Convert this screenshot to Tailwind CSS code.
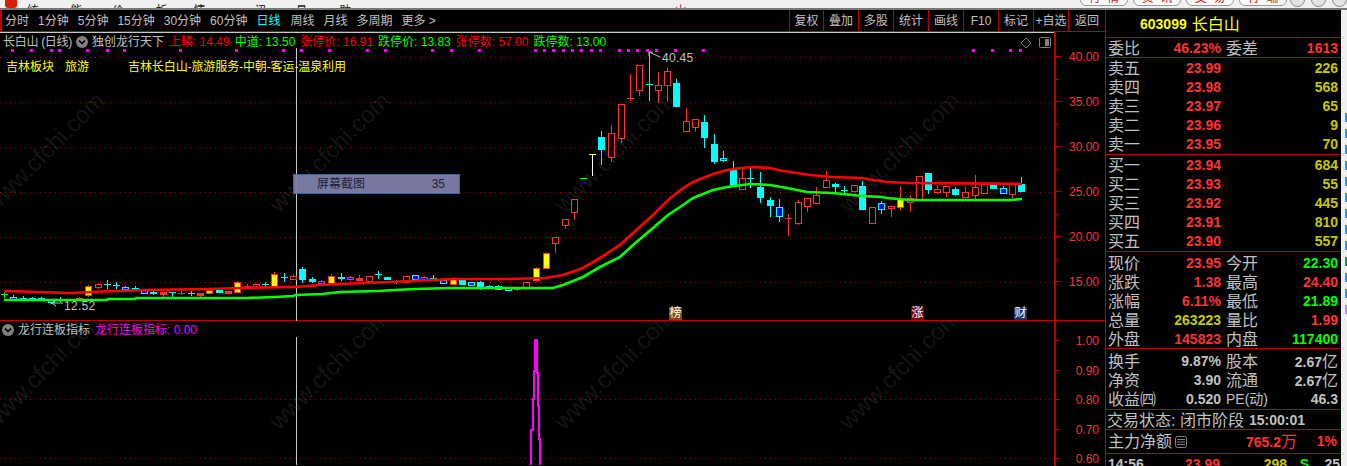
<!DOCTYPE html>
<html lang="zh-CN">
<head>
    <meta charset="UTF-8">
    <title>长白山 日线</title>
    <script src="https://cdn.jsdelivr.net/npm/@tailwindcss/browser@4"></script>
</head>
<body class="bg-black w-[1347px] h-[466px] overflow-hidden font-['Liberation_Sans','Noto_Sans_CJK_SC',sans-serif] text-[12px] text-[#c0c0c0]">

    <!-- menu bar, cut off by the top of the window -->
    <div class="relative h-[10px] overflow-hidden bg-[#f0f0f0] border-b-2 border-[#777777] text-[#222222]">
        <div class="flex h-[16px] -mt-[5px] items-center leading-[16px]">
            <div class="w-[12px] h-[14px] -mt-[4px] ml-[5px] bg-[#d81e06] rounded-b-[3px]"></div>
            <span class="ml-[10px]">系统</span>
            <span class="ml-[20px]">功能</span>
            <span class="ml-[18px]">报价</span>
            <span class="ml-[20px]">分析</span>
            <span class="ml-[14px]">扩展行情</span>
            <span class="ml-[14px]">资讯</span>
            <span class="ml-[17px]">工具</span>
            <span class="ml-[20px]">帮助</span>
            <span class="ml-[312px] text-[#e01010]">交易未登录&nbsp;&nbsp;长白山</span>
            <div class="flex ml-[304px] gap-[5px] text-[#d01010]">
                <span class="w-[48px] h-[15px] -mt-[9px] text-center leading-[13px] border border-[#999999] rounded-b-[6px] bg-white">行&nbsp;&nbsp;情</span>
                <span class="w-[48px] h-[15px] -mt-[9px] text-center leading-[13px] border border-[#999999] rounded-b-[6px] bg-white">资&nbsp;&nbsp;讯</span>
                <span class="w-[48px] h-[15px] -mt-[9px] text-center leading-[13px] border border-[#999999] rounded-b-[6px] bg-white">交&nbsp;&nbsp;易</span>
                <span class="w-[48px] h-[15px] -mt-[9px] text-center leading-[13px] border border-[#999999] rounded-b-[6px] bg-white">行&nbsp;&nbsp;端</span>
            </div>
            <div class="flex ml-[3px] gap-[6px]">
                <span class="w-[15px] h-[15px] -mt-[8px] border border-[#888888] rounded-full bg-[#e4e4e4]"></span>
                <span class="w-[15px] h-[15px] -mt-[8px] border border-[#888888] rounded-full bg-[#e4e4e4]"></span>
                <span class="w-[15px] h-[15px] -mt-[8px] border border-[#888888] rounded-full bg-[#e4e4e4]"></span>
            </div>
        </div>
    </div>

    <div class="flex h-[456px]">
        <!-- left: toolbar and charts -->
        <div class="w-[1106px] shrink-0 border-r border-[#c00000] flex flex-col">
            <div class="flex justify-between h-[22px] shrink-0 border-b border-[#c00000] border-l-2 leading-[23px]">
                <div class="flex gap-[9px] pl-[3px]">
                    <span>分时</span><span>1分钟</span><span>5分钟</span><span>15分钟</span><span>30分钟</span><span>60分钟</span>
                    <span class="text-[#00ffff]">日线</span>
                    <span class="ml-px">周线</span><span>月线</span><span>多周期</span><span>更多 &gt;</span>
                </div>
                <div class="flex text-center">
                    <span class="w-[34px] border-l border-[#c00000]">复权</span>
                    <span class="w-[35px] border-l border-[#c00000]">叠加</span>
                    <span class="w-[35px] border-l border-[#c00000]">多股</span>
                    <span class="w-[35px] border-l border-[#c00000]">统计</span>
                    <span class="w-[35px] border-l border-[#c00000]">画线</span>
                    <span class="w-[35px] border-l border-[#c00000]">F10</span>
                    <span class="w-[35px] border-l border-[#c00000]">标记</span>
                    <span class="w-[35px] border-l border-[#c00000]">+自选</span>
                    <span class="w-[37px] border-l border-[#c00000]">返回</span>
                </div>
            </div>

            <!-- price pane -->
            <div class="flex h-[289px] shrink-0 border-b border-[#c00000]">
                <div class="relative w-[1054px] shrink-0 border-t border-[#c8c8c8]">
                    <svg id="price" class="absolute left-0 top-0" width="1054" height="288" viewBox="0 33 1054 288"></svg>
                    <div class="relative flex items-center h-[17px] pl-[3px] whitespace-nowrap">
                        <span class="tracking-[-0.3px]">长白山 (日线)</span>
                        <svg class="ml-[4px]" width="12" height="12" viewBox="0 0 12 12"><circle cx="6" cy="6" r="6" fill="#808080"/><path d="M3 4.5 L6 7.5 L9 4.5" stroke="#000" stroke-width="1.6" fill="none"/></svg>
                        <span class="ml-[4px]">独创龙行天下</span>
                        <span class="ml-[5px] text-[#ff0000]">上轔: 14.49</span>
                        <span class="ml-[5px] text-[#00ff00]">中道: 13.50</span>
                        <span class="ml-[5px] text-[#ff0000]">张停价: 16.91</span>
                        <span class="ml-[5px] text-[#00ff00]">跌停价: 13.83</span>
                        <span class="ml-[5px] text-[#ff0000]">张停数: 57.00</span>
                        <span class="ml-[5px] text-[#00ff00]">跌停数: 13.00</span>
                    </div>
                    <div class="relative flex mt-[8px] pl-[6px] text-[#ffff00] whitespace-nowrap">
                        <span>吉林板块</span>
                        <span class="ml-[11px]">旅游</span>
                        <span class="ml-[39px] tracking-[-0.1px]">吉林长白山-旅游服务-中朝-客运-温泉利用</span>
                    </div>
                    <!-- corner icons -->
                    <svg class="absolute left-[1020px] top-[4px]" width="32" height="12" viewBox="0 0 32 12"><path d="M6 1 L11 6 L6 11 L1 6 Z" stroke="#808080" fill="none"/><rect x="19.5" y="0.5" width="11" height="10" rx="1" stroke="#808080" fill="none"/><rect x="25" y="2" width="4" height="7" fill="#808080"/></svg>
                    <!-- tooltip -->
                    <div class="absolute left-[293px] top-[141px] flex items-center justify-between w-[167px] h-[20px] pl-[23px] pr-[14px] bg-[#8080a8]/95 border border-[#2e6ab0] text-[#20203a]">
                        <span>屏幕截图</span><span>35</span>
                    </div>
                    <!-- signal badges -->
                    <span class="absolute left-[669px] top-[274px] w-[13px] h-[13px] bg-[#7a4a10] text-white text-center leading-[13px]">榜</span>
                    <span class="absolute left-[911px] top-[274px] w-[13px] h-[13px] bg-[#800000] text-white text-center leading-[13px]">涨</span>
                    <span class="absolute left-[1014px] top-[274px] w-[13px] h-[13px] bg-[#0a3a70] text-white text-center leading-[13px]">财</span>
                </div>
                <div class="relative flex-1 border-l-2 border-[#c00000] pt-[3px] pr-[6px] text-right text-[#ff3232]">
                    <svg id="priceTicks" class="absolute left-0 top-0" width="8" height="288"></svg>
                    <div class="h-[45px] leading-[45px]">40.00</div>
                    <div class="h-[45px] leading-[45px]">35.00</div>
                    <div class="h-[45px] leading-[45px]">30.00</div>
                    <div class="h-[45px] leading-[45px]">25.00</div>
                    <div class="h-[45px] leading-[45px]">20.00</div>
                    <div class="h-[45px] leading-[45px]">15.00</div>
                </div>
            </div>

            <!-- indicator pane -->
            <div class="flex flex-1 min-h-0 overflow-hidden">
                <div class="relative w-[1054px] shrink-0">
                    <svg id="sub" class="absolute left-0 top-0" width="1054" height="144" viewBox="0 322 1054 144"></svg>
                    <div class="relative flex items-center h-[18px] pl-[2px] whitespace-nowrap">
                        <svg width="12" height="12" viewBox="0 0 12 12"><circle cx="6" cy="6" r="6" fill="#808080"/><path d="M3 4.5 L6 7.5 L9 4.5" stroke="#000" stroke-width="1.6" fill="none"/></svg>
                        <span class="ml-[4px]">龙行连板指标</span>
                        <span class="ml-[5px] text-[#ff00ff]">龙行连板指标: 0.00</span>
                    </div>
                </div>
                <div class="relative flex-1 border-l-2 border-[#c00000] pt-[6px] pr-[6px] text-right text-[#ff3232]">
                    <svg id="subTicks" class="absolute left-0 top-0" width="8" height="144"></svg>
                    <div class="h-[29.5px] leading-[29.5px]">1.00</div>
                    <div class="h-[29.5px] leading-[29.5px]">0.90</div>
                    <div class="h-[29.5px] leading-[29.5px]">0.80</div>
                    <div class="h-[29.5px] leading-[29.5px]">0.70</div>
                    <div class="h-[29.5px] leading-[29.5px]">0.60</div>
                </div>
            </div>
        </div>

        <!-- right: quote panel -->
        <div class="w-[235px] shrink-0 text-[14px] font-bold leading-[21px] whitespace-nowrap">
            <div class="flex items-center h-[28px] pt-px pl-[34px] border-b border-[#c00000] text-[#ffff00]">
                <span>603099</span><span class="ml-[5px] text-[16px] font-normal">长白山</span>
            </div>
            <div class="flex h-[20px] pl-[2px] border-b border-[#c00000]">
                <div class="flex justify-between w-[113px]"><span class="text-[16px] font-normal">委比</span><span class="text-[#ff3232]">46.23%</span></div>
                <div class="flex justify-between w-[112px] ml-[5px]"><span class="text-[16px] font-normal">委差</span><span class="text-[#ff3232]">1613</span></div>
            </div>
            <div class="pl-[2px] pb-px border-b border-[#c00000]">
                <div class="flex h-[19px]"><span class="w-[113px] flex justify-between"><span class="text-[16px] font-normal">卖五</span><span class="text-[#ff3232]">23.99</span></span><span class="w-[117px] text-right text-[#c8c800]">226</span></div>
                <div class="flex h-[19px]"><span class="w-[113px] flex justify-between"><span class="text-[16px] font-normal">卖四</span><span class="text-[#ff3232]">23.98</span></span><span class="w-[117px] text-right text-[#c8c800]">568</span></div>
                <div class="flex h-[19px]"><span class="w-[113px] flex justify-between"><span class="text-[16px] font-normal">卖三</span><span class="text-[#ff3232]">23.97</span></span><span class="w-[117px] text-right text-[#c8c800]">65</span></div>
                <div class="flex h-[19px]"><span class="w-[113px] flex justify-between"><span class="text-[16px] font-normal">卖二</span><span class="text-[#ff3232]">23.96</span></span><span class="w-[117px] text-right text-[#c8c800]">9</span></div>
                <div class="flex h-[19px]"><span class="w-[113px] flex justify-between"><span class="text-[16px] font-normal">卖一</span><span class="text-[#ff3232]">23.95</span></span><span class="w-[117px] text-right text-[#c8c800]">70</span></div>
            </div>
            <div class="pl-[2px] pb-px border-b border-[#c00000]">
                <div class="flex h-[19px]"><span class="w-[113px] flex justify-between"><span class="text-[16px] font-normal">买一</span><span class="text-[#ff3232]">23.94</span></span><span class="w-[117px] text-right text-[#c8c800]">684</span></div>
                <div class="flex h-[19px]"><span class="w-[113px] flex justify-between"><span class="text-[16px] font-normal">买二</span><span class="text-[#ff3232]">23.93</span></span><span class="w-[117px] text-right text-[#c8c800]">55</span></div>
                <div class="flex h-[19px]"><span class="w-[113px] flex justify-between"><span class="text-[16px] font-normal">买三</span><span class="text-[#ff3232]">23.92</span></span><span class="w-[117px] text-right text-[#c8c800]">445</span></div>
                <div class="flex h-[19px]"><span class="w-[113px] flex justify-between"><span class="text-[16px] font-normal">买四</span><span class="text-[#ff3232]">23.91</span></span><span class="w-[117px] text-right text-[#c8c800]">810</span></div>
                <div class="flex h-[19px]"><span class="w-[113px] flex justify-between"><span class="text-[16px] font-normal">买五</span><span class="text-[#ff3232]">23.90</span></span><span class="w-[117px] text-right text-[#c8c800]">557</span></div>
            </div>
            <div class="pl-[2px] pt-px border-b border-[#c00000]">
                <div class="flex h-[19px]"><span class="w-[113px] flex justify-between"><span class="text-[16px] font-normal">现价</span><span class="text-[#ff3232]">23.95</span></span><span class="w-[112px] ml-[5px] flex justify-between"><span class="text-[16px] font-normal">今开</span><span class="text-[#00ff00]">22.30</span></span></div>
                <div class="flex h-[19px]"><span class="w-[113px] flex justify-between"><span class="text-[16px] font-normal">涨跌</span><span class="text-[#ff3232]">1.38</span></span><span class="w-[112px] ml-[5px] flex justify-between"><span class="text-[16px] font-normal">最高</span><span class="text-[#ff3232]">24.40</span></span></div>
                <div class="flex h-[19px]"><span class="w-[113px] flex justify-between"><span class="text-[16px] font-normal">涨幅</span><span class="text-[#ff3232]">6.11%</span></span><span class="w-[112px] ml-[5px] flex justify-between"><span class="text-[16px] font-normal">最低</span><span class="text-[#00ff00]">21.89</span></span></div>
                <div class="flex h-[19px]"><span class="w-[113px] flex justify-between"><span class="text-[16px] font-normal">总量</span><span class="text-[#c8c800]">263223</span></span><span class="w-[112px] ml-[5px] flex justify-between"><span class="text-[16px] font-normal">量比</span><span class="text-[#ff3232]">1.99</span></span></div>
                <div class="flex h-[19px]"><span class="w-[113px] flex justify-between"><span class="text-[16px] font-normal">外盘</span><span class="text-[#ff3232]">145823</span></span><span class="w-[112px] ml-[5px] flex justify-between"><span class="text-[16px] font-normal">内盘</span><span class="text-[#00ff00]">117400</span></span></div>
            </div>
            <div class="pl-[2px] pt-[2px] pb-px border-b border-[#c00000]">
                <div class="flex h-[19px]"><span class="w-[113px] flex justify-between"><span class="text-[16px] font-normal">换手</span><span>9.87%</span></span><span class="w-[112px] ml-[5px] flex justify-between"><span class="text-[16px] font-normal">股本</span><span>2.67<span class="text-[16px] font-normal">亿</span></span></span></div>
                <div class="flex h-[19px]"><span class="w-[113px] flex justify-between"><span class="text-[16px] font-normal">净资</span><span>3.90</span></span><span class="w-[112px] ml-[5px] flex justify-between"><span class="text-[16px] font-normal">流通</span><span>2.67<span class="text-[16px] font-normal">亿</span></span></span></div>
                <div class="flex h-[19px]"><span class="w-[113px] flex justify-between"><span class="text-[16px] font-normal">收益㈣</span><span>0.520</span></span><span class="w-[112px] ml-[5px] flex justify-between"><span class="text-[14px] font-normal">PE(动)</span><span>46.3</span></span></div>
            </div>
            <div class="flex h-[20px] pl-[1px] border-b border-[#c00000]">
                <span class="text-[16px] font-normal">交易状态: 闭市阶段</span><span class="ml-[5px]">15:00:01</span>
            </div>
            <div class="flex items-center h-[24px] pl-[2px] border-b border-[#c00000]">
                <span class="text-[16px] font-normal">主力净额</span>
                <svg class="ml-[3px]" width="12" height="12" viewBox="0 0 12 12"><rect x="0.5" y="0.5" width="11" height="11" rx="2" stroke="#808080" fill="none"/><path d="M2 3.5 H10 M2 6 H10 M2 8.5 H10" stroke="#808080"/></svg>
                <span class="ml-[36px] w-[74px] text-right text-[#ff3232]">765.2<span class="text-[16px] font-normal">万</span></span>
                <span class="ml-[7px] w-[33px] text-right text-[#ff3232]">1%</span>
            </div>
            <div class="flex h-[19px] pl-[2px]">
                <span class="w-[35px]">14:56</span>
                <span class="w-[77px] text-right text-[#ff3232]">23.99</span>
                <span class="w-[67px] text-right text-[#c8c800]">298</span>
                <span class="w-[22px] text-right text-[#00ff00]">S</span>
                <span class="w-[31px] text-right">25</span>
            </div>
        </div>

        <!-- edge of the window behind -->
        <div class="flex-1 bg-[#f0f0f0] flex flex-col items-end pt-[103px] gap-[7px]">
            <span class="w-[2px] h-[9px] bg-[#3a8ee6]"></span>
            <span class="w-[2px] h-[9px] bg-[#3a8ee6]"></span>
            <span class="w-[2px] h-[9px] bg-[#3a8ee6]"></span>
            <span class="w-[2px] h-[9px] bg-[#3a8ee6]"></span>
            <span class="w-[2px] h-[9px] bg-[#3a8ee6]"></span>
            <span class="w-[2px] h-[9px] bg-[#3a8ee6]"></span>
            <span class="w-[2px] h-[9px] bg-[#3a8ee6]"></span>
            <span class="w-[2px] h-[9px] bg-[#3a8ee6]"></span>
            <span class="w-[2px] h-[9px] bg-[#3a8ee6]"></span>
            <span class="w-[2px] h-[9px] bg-[#1f8a5a]"></span>
            <span class="w-[2px] h-[9px] bg-[#3a8ee6]"></span>
            <span class="w-[2px] h-[9px] bg-[#3a8ee6]"></span>
            <span class="w-[2px] h-[9px] bg-[#b090e0]"></span>
        </div>
    </div>

    <script>
        // candles in screen pixels: x, wick top, wick bottom, body top, body bottom, kind
        // h hollow red, r solid red, c cyan, b blue, B blue with red wick, y yellow, g green
        const candles = [
            [4,291,297,294,294,'g'],[13,295,299,297,299,'b'],[23,296,300,298,300,'b'],[32,297,300,298,299,'b'],[41,297,300,298,300,'b'],
            [51,299,303,299,302,'b'],[60,297,301,300,300,'c'],[70,299,300,299,299,'r'],[79,297,300,298,300,'r'],[88,285,296,286,295,'y'],
            [98,283,288,284,287,'h'],[107,280,288,284,284,'c'],[116,282,288,285,285,'c'],[125,286,290,287,289,'b'],[135,286,290,288,289,'b'],
            [144,289,293,290,293,'b'],[153,291,294,292,293,'b'],[163,292,296,292,294,'r'],[172,292,297,292,292,'c'],[181,291,294,293,293,'r'],
            [191,291,295,293,293,'c'],[200,293,296,293,295,'r'],[209,289,293,290,293,'y'],[219,290,292,290,292,'c'],[228,291,293,291,293,'r'],
            [237,281,292,282,292,'y'],[247,284,288,286,286,'r'],[256,284,287,284,287,'h'],[265,282,285,284,284,'c'],[274,272,286,274,286,'y'],
            [284,273,281,277,277,'c'],[293,274,279,276,279,'h'],[302,267,282,269,279,'c'],[312,277,282,279,281,'c'],[321,280,284,281,283,'B'],
            [331,274,283,276,283,'y'],[341,273,280,277,278,'c'],[350,276,280,277,279,'B'],[359,275,280,278,280,'r'],[369,276,281,276,281,'h'],
            [378,271,278,274,274,'c'],[387,277,279,277,279,'c'],[396,280,283,281,281,'c'],[406,276,282,276,282,'h'],[415,275,279,275,279,'b'],
            [424,276,279,277,279,'B'],[433,275,280,278,280,'b'],[443,280,283,280,283,'b'],[453,277,284,278,284,'y'],[462,279,284,279,284,'c'],
            [471,282,285,282,285,'b'],[480,281,289,282,287,'c'],[489,285,288,286,286,'c'],[498,285,289,286,289,'b'],[508,288,290,288,290,'b'],
            [517,289,290,289,289,'r'],[526,282,287,282,287,'h'],[536,267,281,268,280,'y'],[546,252,268,253,268,'y'],[555,237,252,237,243,'h'],
            [565,219,228,219,225,'h'],[574,199,219,199,212,'h'],[583,178,178,178,178,'g'],[601,131,164,137,149,'c'],[611,125,161,133,157,'h'],
            [621,104,142,104,138,'h'],[630,74,100,98,98,'r'],[639,65,95,65,90,'h'],[649,53,100,84,84,'c'],[658,72,102,85,90,'h'],
            [667,67,101,71,85,'h'],[676,79,106,83,106,'c'],[686,108,131,121,131,'h'],[695,119,131,119,127,'h'],[704,115,147,122,137,'c'],
            [714,134,163,144,161,'c'],[723,151,161,158,160,'b'],[733,161,186,170,186,'c'],[742,168,189,178,189,'h'],[750,168,187,178,178,'b'],
            [760,172,202,187,197,'c'],[770,197,216,200,205,'c'],[779,199,221,207,216,'b'],[788,214,235,218,218,'r'],[798,200,224,202,223,'h'],
            [807,198,211,198,206,'h'],[816,187,203,195,203,'h'],[826,171,187,180,187,'h'],[835,183,193,184,186,'c'],[844,186,193,190,190,'c'],
            [854,185,191,185,191,'h'],[862,181,209,186,209,'c'],[872,207,223,207,223,'h'],[881,201,213,203,209,'b'],[891,206,216,206,208,'B'],
            [900,186,209,199,207,'y'],[910,195,211,198,202,'h'],[919,176,199,176,199,'h'],[928,173,193,173,189,'c'],[937,185,193,189,192,'h'],
            [946,186,196,186,192,'h'],[955,187,195,189,194,'c'],[965,187,197,192,197,'h'],[975,175,199,187,195,'h'],[984,184,193,184,193,'h'],
            [993,182,188,184,188,'c'],[1003,186,193,188,193,'b'],[1012,182,197,184,194,'h'],[1021,177,191,184,191,'c']
        ];
        const redLine = [[4,291],[40,292],[70,293],[92,292],[116,291],[144,290],[209,289],[240,288],[285,287],[296,287],[320,285],[340,284],[388,282],[432,280],[455,279],[510,279],[545,278],[563,275],[583,268],[600,258],[620,245],[633,233],[653,215],[668,200],[683,188],[693,182],[713,174],[727,170],[741,168],[753,167],[770,168],[783,171],[797,173],[810,175],[833,177],[862,178],[873,180],[887,182],[910,183],[1022,184]];
        const greenLine = [[4,300],[107,300],[108,299],[135,299],[136,298],[247,298],[275,297],[293,296],[296,295],[322,294],[340,292],[378,291],[395,290],[415,289],[450,288],[553,288],[563,285],[583,277],[600,267],[620,257],[633,245],[653,228],[668,215],[683,205],[693,198],[713,190],[727,187],[750,184],[770,185],[787,188],[807,192],[833,193],[853,195],[863,196],[882,197],[887,198],[910,200],[1010,200],[1022,199]];
        const dots = [12,31,51,59,87,107,124,180,236,283,301,329,367,385,432,451,479,535,544,553,563,572,581,591,600,619,628,637,647,656,675,703,973,992,1010,1020];
        const marks = [[50,158],[335,158],[620,158],[905,158],[1190,158]];

        function candle(c) {
            const [x, wt, wb, bt, bb, k] = c;
            const edge = {h:'#ff3232', r:'#ff3232', c:'#00ffff', b:'#00ffff', B:'#ff3232', y:'#ff3232', g:'#00ff00'}[k];
            const fill = {h:'#000', r:'#ff3232', c:'#00ffff', b:'#0000ff', B:'#0000ff', y:'#ffff00', g:'#00ff00'}[k];
            let s = `<path d="M${x+.5} ${wt} V${wb+1}" stroke="${edge}"/>`;
            if (bb - bt < 1) return s + `<path d="M${x-3} ${bt+.5} H${x+4}" stroke="${edge}"/>`;
            return s + `<rect x="${x-3+.5}" y="${bt+.5}" width="6" height="${bb-bt}" fill="${fill}" stroke="${edge}"/>`;
        }
        const poly = (pts, color) => `<polyline points="${pts.map(p => p.join(',')).join(' ')}" fill="none" stroke="${color}" stroke-width="2.7"/>`;
        const grid = y => `<path d="M0 ${y+.5} H1054" stroke="#c00000" stroke-dasharray="1 4"/>`;
        const wm = (x, y) => `<text x="${x}" y="${y}" text-anchor="middle" font-family="Liberation Sans" font-size="24" fill="#808080" fill-opacity="0.17" transform="rotate(-45 ${x} ${y})">www.cfchi.com</text>`;

        let s = '<g shape-rendering="crispEdges">';
        [57,102,147,192,237,282].forEach(y => s += grid(y));
        s += '<path d="M296.5 48 V321" stroke="#c8c8c8"/>';
        dots.forEach(x => s += `<rect x="${x-1}" y="49" width="3" height="3" fill="#ff00ff"/>`);
        candles.forEach(c => s += candle(c));
        // the white doji and its yellow cap
        s += '<path d="M592.5 154 V176" stroke="#fff"/><path d="M589 154.5 H596" stroke="#ffff00"/></g>';
        s += poly(redLine, '#ff0000') + poly(greenLine, '#00ff00');
        // high and low labels
        s += '<path d="M649 52 L660 57 M649 52 h4 M649 52 v4" stroke="#c0c0c0" fill="none"/><text x="662" y="62" font-family="Liberation Sans" font-size="12" letter-spacing="0.3" fill="#c0c0c0">40.45</text>';
        s += '<path d="M52 303 H63 M52 303 l4 -3 M52 303 l4 3" stroke="#c0c0c0" fill="none"/><text x="64" y="310" font-family="Liberation Sans" font-size="12" letter-spacing="0.3" fill="#c0c0c0">12.52</text>';
        marks.forEach(m => s += wm(m[0], m[1]));
        document.getElementById('price').innerHTML = s;

        let t = '<g shape-rendering="crispEdges">';
        [400,459].forEach(y => t += grid(y));
        t += '<path d="M296.5 338 V466" stroke="#c8c8c8"/>';
        t += '<path d="M531 466 V431 H533 V400 H534 V372 H535 V341 H537 V374 H538 V407 H539 V440 H540 V466" fill="none" stroke="#ff00ff" stroke-width="1.5"/></g>';
        marks.forEach(m => t += wm(m[0], m[1] + 218));
        document.getElementById('sub').innerHTML = t;

        let a = '<g shape-rendering="crispEdges" stroke="#c00000">';
        for (let i = 0; i < 6; i++) {
            a += `<path d="M0 ${24.5 + i*45} H5"/>`;
            if (i < 5) a += `<path d="M0 ${47 + i*45 + .5} H3"/>`;
        }
        a += '</g>';
        document.getElementById('priceTicks').innerHTML = a;

        let b = '<g shape-rendering="crispEdges" stroke="#c00000">';
        [19,49,78,108,137].forEach(y => b += `<path d="M0 ${y+.5} H4"/>`);
        b += '</g>';
        document.getElementById('subTicks').innerHTML = b;
    </script>
</body>
</html>
